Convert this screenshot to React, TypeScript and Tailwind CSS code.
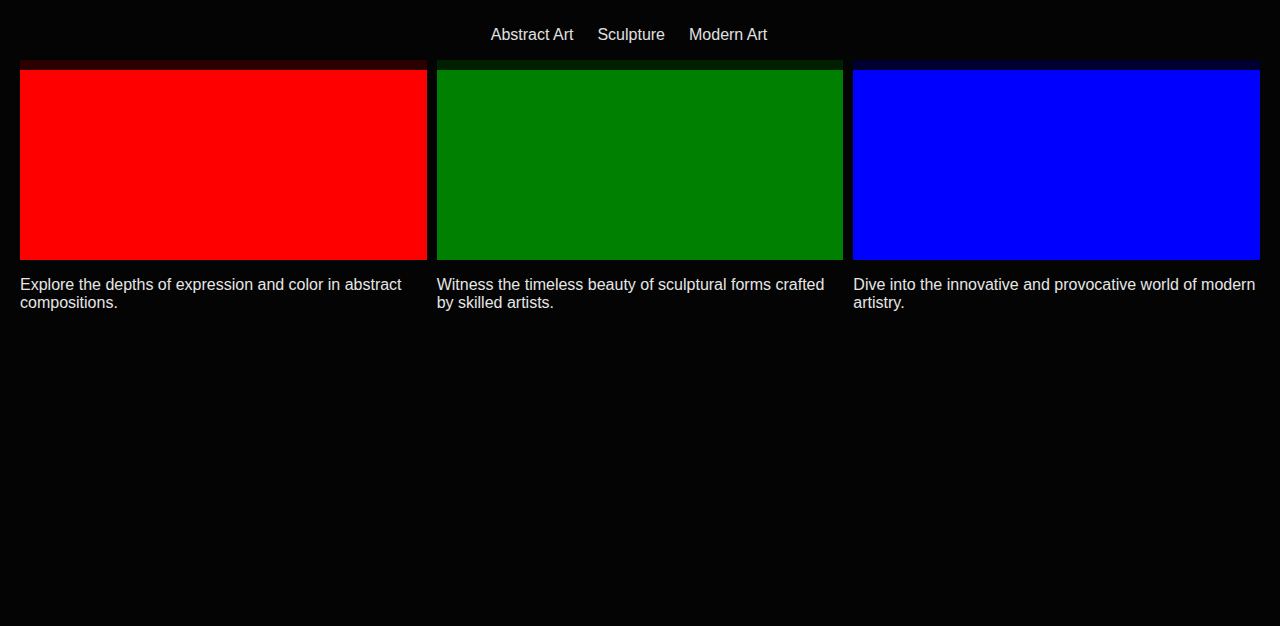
import React from "react";

const cards = [
  {
    title: "Abstract Art",
    strip: "bg-[#2a0000]",
    fill: "bg-[#ff0000]",
    text: "Explore the depths of expression and color in abstract compositions.",
  },
  {
    title: "Sculpture",
    strip: "bg-[#002000]",
    fill: "bg-[#008000]",
    text: "Witness the timeless beauty of sculptural forms crafted by skilled artists.",
  },
  {
    title: "Modern Art",
    strip: "bg-[#000030]",
    fill: "bg-[#0000ff]",
    text: "Dive into the innovative and provocative world of modern artistry.",
  },
];

export default function App() {
  return (
    <div className="min-h-[626px] w-full bg-[#040404] text-[#e6e6e6] font-['Liberation_Sans',Arial,sans-serif]">
      {/* nav, each link carries a trailing margin so the row sits a bit left of centre */}
      <nav className="flex justify-center h-[60px] pt-[26px] text-[16px] leading-[18px]">
        {cards.map((c) => (
          <a key={c.title} className="ml-[1px] mr-[23px] text-[#e0e0e0] cursor-pointer">
            {c.title}
          </a>
        ))}
      </nav>

      {/* gallery */}
      <div className="grid grid-cols-3 gap-[10px] px-[20px]">
        {cards.map((c) => (
          <div key={c.title} className="flex flex-col">
            <div className={`h-[10px] ${c.strip}`} />
            <div className={`h-[190px] ${c.fill}`} />
            <p className="mt-[16px] text-[16px] leading-[18px]">{c.text}</p>
          </div>
        ))}
      </div>
    </div>
  );
}
